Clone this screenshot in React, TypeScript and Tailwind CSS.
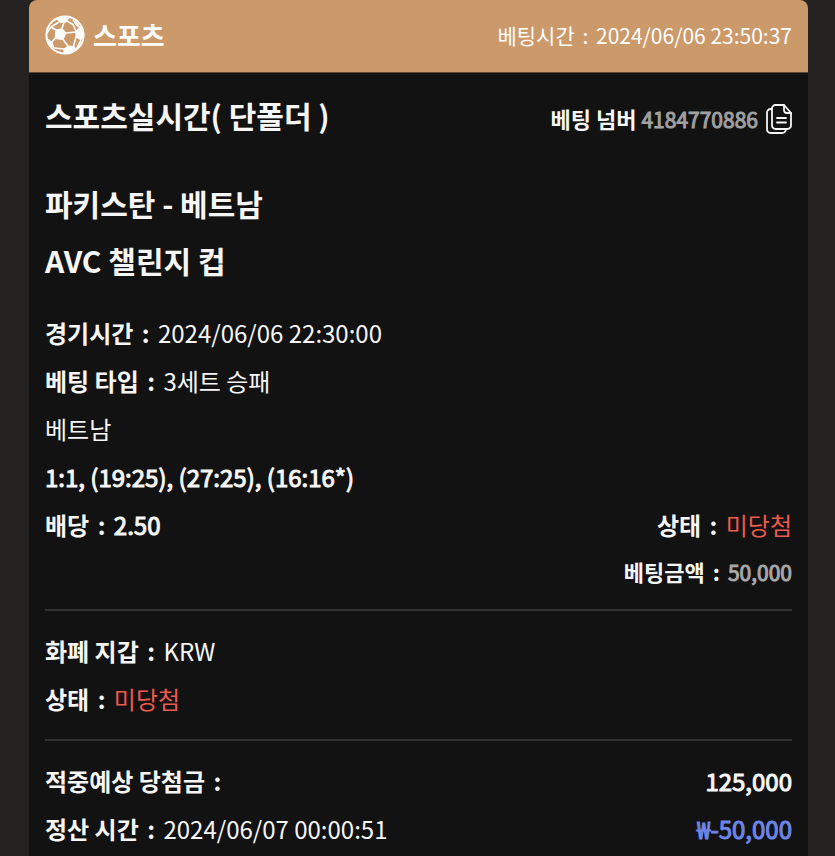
import { useState } from "react";

const font = "font-['Noto_Sans_CJK_KR','Noto_Sans_CJK_SC',sans-serif]";

function BallIcon() {
  return (
    <svg viewBox="0 0 40 40" className="size-10 shrink-0" fill="none" stroke="currentColor" strokeWidth="1.600" strokeLinejoin="round" aria-hidden="true">
      <circle cx="20" cy="20" r="18.600" strokeWidth="2" />
      <g fill="currentColor" strokeWidth="1">
        <path d="M11 15l6-1.500 4 4.500-3 6.500-8-1z" />
        <path d="M12 4l6-2.500 6 1.500-3 4-6 .5z" />
        <path d="M31 16l5-4.500 3 7.500-3 6-5-3z" />
        <path d="M19 34l4-3 6 .5 2 3-6 3.500-6 0z" />
        <path d="M2.500 24l4.500 3 2 6-4-3z" />
        <path d="M28 5l4 3 4 6-5-4z" />
      </g>
      <path d="M17 13.500l2-6.500M21 18l10-1M18 24.500l5 6.500M10 23.500L7 27M11 15l-5-3M22 6l6 3.500 3 6.500M31 22l-2.500 9.500M9 33l10 1M6 12l8-5M6 12l-4 6M36 25l-5 9.500" />
    </svg>
  );
}

function CopyIcon() {
  return (
    <svg viewBox="0 0 26 30" className="h-[30px] w-[26px]" fill="none" stroke="currentColor" strokeWidth="1.800" strokeLinecap="round" strokeLinejoin="round" aria-hidden="true">
      <path d="M18 1H9.500A3.500 3.500 0 0 0 6 4.500v17A3.500 3.500 0 0 0 9.500 25h12a3.500 3.500 0 0 0 3.500-3.500V9z" />
      <path d="M18 1v5a3 3 0 0 0 3 3h4" />
      <path d="M6 5H4.500A3.500 3.500 0 0 0 1 8.500v17A3.500 3.500 0 0 0 4.500 29H16a4 4 0 0 0 4-4" />
      <path d="M11 14h9M11 18.500h9" />
    </svg>
  );
}

function Colon() {
  return <span className="px-[3px]">:</span>;
}

type RowProps = { label: string; children?: React.ReactNode };

function Row({ label, children }: RowProps) {
  return (
    <p className="whitespace-nowrap">
      <span className="font-bold">
        {label} <Colon />
      </span>{" "}
      {children}
    </p>
  );
}

// figures use the regular cut with a stroke, the bold one is too wide
function Figure({ children }: { children: React.ReactNode }) {
  return <span className="[-webkit-text-stroke:1px]">{children}</span>;
}

export default function App() {
  const [copied, setCopied] = useState(false);

  function copyNumber() {
    navigator.clipboard?.writeText("4184770886");
    setCopied(true);
  }

  return (
    <div className={`min-h-screen bg-[#242321] pr-[27px] pl-[29px] text-[#f6f6f6] ${font}`}>
      <main className="min-h-screen overflow-hidden rounded-t-lg bg-[#121212]">
        {/* Header */}
        <header className="flex h-[73px] items-center justify-between border-b border-[#5c4632] bg-[#cc996b] px-4 pb-0.5 text-white">
          <div className="flex items-center gap-2">
            <BallIcon />
            <span className="text-[26px] leading-8 font-bold">스포츠</span>
          </div>
          <p className="text-[21px] leading-8">
            베팅시간 <Colon /> 2024/06/06 23:50:37
          </p>
        </header>

        <div className="px-4">
          {/* Title */}
          <div className="flex h-[84px] items-center justify-between">
            <h1 className="text-[30px] font-bold">스포츠실시간( 단폴더 )</h1>
            <div className="flex items-center gap-2 pt-2 text-[22px]">
              <p>
                <span className="font-bold">베팅 넘버</span>{" "}
                <span className="text-[21px] text-[#a0a0a0]">
                  <Figure>4184770886</Figure>
                </span>
              </p>
              <button type="button" onClick={copyNumber} aria-label={copied ? "복사됨" : "복사"}>
                <CopyIcon />
              </button>
            </div>
          </div>

          <div className="mt-[18px] text-[30px] leading-[57px] font-bold">
            <h2>파키스탄 - 베트남</h2>
            <h2>AVC 챌린지 컵</h2>
          </div>

          {/* Game */}
          <section className="mt-5 text-2xl leading-[48px]">
            <Row label="경기시간">2024/06/06 22:30:00</Row>
            <Row label="베팅 타입">3세트 승패</Row>
            <p>베트남</p>
            <p>
              <Figure>1:1, (19:25), (27:25), (16:16*)</Figure>
            </p>
            <div className="flex justify-between">
              <Row label="배당">
                <Figure>2.50</Figure>
              </Row>
              <Row label="상태">
                <span className="text-[#ed5a4e]">미당첨</span>
              </Row>
            </div>
            <div className="flex justify-end text-[22px] leading-[44px]">
              <Row label="베팅금액">
                <span className="text-[21px] text-[#a8a8a8]">
                  <Figure>50,000</Figure>
                </span>
              </Row>
            </div>
          </section>

          {/* Wallet */}
          <section className="mt-[15px] border-y-2 border-[#333333] py-4 text-2xl leading-[48px]">
            <Row label="화폐 지갑">KRW</Row>
            <Row label="상태">
              <span className="text-[#ed5a4e]">미당첨</span>
            </Row>
          </section>

          {/* Settlement */}
          <section className="pt-4 text-2xl leading-[48px]">
            <div className="flex justify-between">
              <Row label="적중예상 당첨금" />
              <p>
                <Figure>125,000</Figure>
              </p>
            </div>
            <div className="flex justify-between">
              <Row label="정산 시간">2024/06/07 00:00:51</Row>
              <p className="text-[#6c86e8]">
                <Figure>₩-50,000</Figure>
              </p>
            </div>
          </section>
        </div>
      </main>
    </div>
  );
}
